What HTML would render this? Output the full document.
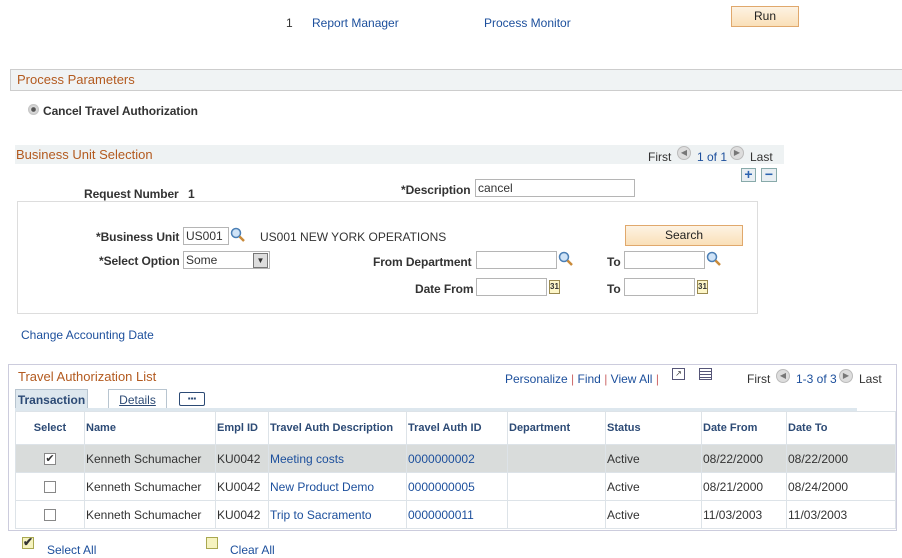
<!DOCTYPE html>
<html><head><meta charset="utf-8"><style>
*{margin:0;padding:0;box-sizing:border-box}
body{width:902px;height:558px;background:#fff;font-family:"Liberation Sans",Arial,sans-serif;font-size:12px;color:#333;position:relative;overflow:hidden}
.a{position:absolute;white-space:nowrap}
.lnk{color:#1c4f9c}
.b{font-weight:bold;color:#333;letter-spacing:-0.1px}
.hdr{color:#b35a1f;font-size:13px}
.inp{position:absolute;border:1px solid #b5b5b5;background:#fff;height:18px;font-size:12px;padding:1px 2px;color:#333}
.btn{position:absolute;border:1px solid #e0a86c;background:linear-gradient(#fdf3e3,#fae0b8);text-align:center;font-size:12px;color:#222}
.mag{position:absolute;width:16px;height:16px}
.cal{position:absolute;width:11px;height:14px;border:1px solid #9a8a50;background:#fdf6c8;font-size:8px;line-height:12px;text-align:center;color:#333;font-weight:bold}
table{border-collapse:collapse;position:absolute;left:15px;top:411px;width:881px}
td{border:1px solid #dde3e8;font-size:12px;padding:0 1px;height:28px;color:#333;white-space:nowrap}
th{border:1px solid #dde3e8;font-size:11px;font-weight:bold;color:#2c4a75;text-align:left;height:33px;padding:0 1px}
.cb{display:inline-block;width:12px;height:12px;border:1px solid #888;background:#fff;vertical-align:middle;position:relative;font-size:11px;line-height:10px;text-align:center}
</style></head><body>
<div class="a" style="left:286px;top:16px">1</div>
<div class="a lnk" style="left:312px;top:16px">Report Manager</div>
<div class="a lnk" style="left:484px;top:16px">Process Monitor</div>
<div class="btn" style="left:731px;top:6px;width:68px;height:21px;line-height:19px">Run</div>

<div class="a" style="left:10px;top:69px;width:892px;height:22px;background:#f0f3f4;border:1px solid #cdcdcd;border-right:none"></div>
<div class="a hdr" style="left:17px;top:72px">Process Parameters</div>
<div class="a" style="left:28px;top:104px;width:11px;height:11px;border-radius:50%;background:radial-gradient(#555 25%,#ddd 35%,#aaa 100%)"></div>
<div class="a b" style="left:43px;top:104px">Cancel Travel Authorization</div>

<div class="a" style="left:15px;top:145px;width:769px;height:19px;background:#eef2f3"></div>
<div class="a hdr" style="left:16px;top:147px">Business Unit Selection</div>
<div class="a" style="left:648px;top:150px;color:#333">First</div>
<div class="a" style="left:677px;top:146px;width:14px;height:14px;border-radius:50%;background:#ddd;border:1px solid #bbb;font-size:8px;line-height:12px;text-align:center;color:#777">◀</div>
<div class="a lnk" style="left:697px;top:150px">1 of 1</div>
<div class="a" style="left:730px;top:146px;width:14px;height:14px;border-radius:50%;background:#ddd;border:1px solid #bbb;font-size:8px;line-height:12px;text-align:center;color:#777">▶</div>
<div class="a" style="left:750px;top:150px">Last</div>
<div class="a" style="left:741px;top:168px;width:15px;height:14px;border:1px solid #8aa;background:#e8eef2;color:#2a62b0;font-weight:bold;font-size:14px;line-height:11px;text-align:center">+</div>
<div class="a" style="left:761px;top:168px;width:16px;height:14px;border:1px solid #8aa;background:#e8eef2;color:#2a62b0;font-weight:bold;font-size:14px;line-height:11px;text-align:center">−</div>

<div class="a b" style="left:84px;top:187px">Request Number</div>
<div class="a b" style="left:188px;top:187px">1</div>
<div class="a b" style="left:401px;top:183px">*Description</div>
<div class="inp" style="left:475px;top:179px;width:160px">cancel</div>

<div class="a" style="left:17px;top:201px;width:741px;height:113px;border:1px solid #ddd"></div>
<div class="a b" style="left:96px;top:230px">*Business Unit</div>
<div class="inp" style="left:183px;top:227px;width:46px">US001</div>
<svg class="mag" style="left:230px;top:227px" viewBox="0 0 16 16"><circle cx="6" cy="6" r="4.5" fill="#cfe3f7" stroke="#4b7fb5" stroke-width="1.5"/><path d="M9.5 9.5L14 14" stroke="#c98a3a" stroke-width="2.5"/></svg>
<div class="a" style="left:260px;top:230px">US001 NEW YORK OPERATIONS</div>
<div class="btn" style="left:625px;top:225px;width:118px;height:21px;line-height:19px">Search</div>
<div class="a b" style="left:99px;top:254px">*Select Option</div>
<div class="inp" style="left:183px;top:251px;width:87px">Some</div>
<div class="a" style="left:253px;top:253px;width:15px;height:15px;background:#ddd;border:1px solid #777;font-size:8px;line-height:13px;text-align:center">▼</div>
<div class="a b" style="left:373px;top:255px">From Department</div>
<div class="inp" style="left:476px;top:251px;width:81px"></div>
<svg class="mag" style="left:558px;top:251px" viewBox="0 0 16 16"><circle cx="6" cy="6" r="4.5" fill="#cfe3f7" stroke="#4b7fb5" stroke-width="1.5"/><path d="M9.5 9.5L14 14" stroke="#c98a3a" stroke-width="2.5"/></svg>
<div class="a b" style="left:607px;top:255px">To</div>
<div class="inp" style="left:624px;top:251px;width:81px"></div>
<svg class="mag" style="left:706px;top:251px" viewBox="0 0 16 16"><circle cx="6" cy="6" r="4.5" fill="#cfe3f7" stroke="#4b7fb5" stroke-width="1.5"/><path d="M9.5 9.5L14 14" stroke="#c98a3a" stroke-width="2.5"/></svg>
<div class="a b" style="left:415px;top:282px">Date From</div>
<div class="inp" style="left:476px;top:278px;width:71px"></div>
<div class="cal" style="left:549px;top:280px">31</div>
<div class="a b" style="left:607px;top:282px">To</div>
<div class="inp" style="left:624px;top:278px;width:71px"></div>
<div class="cal" style="left:697px;top:280px">31</div>

<div class="a lnk" style="left:21px;top:328px">Change Accounting Date</div>

<div class="a" style="left:8px;top:364px;width:889px;height:167px;border:1px solid #ccd"></div>
<div class="a" style="left:9px;top:365px;width:887px;height:24px;background:#fff"></div>
<div class="a hdr" style="left:18px;top:369px">Travel Authorization List</div>
<div class="a" style="left:505px;top:372px"><span class="lnk">Personalize</span> <span style="color:#c66">|</span> <span class="lnk">Find</span> <span style="color:#c66">|</span> <span class="lnk">View All</span> <span style="color:#c66">|</span></div>
<div class="a" style="left:672px;top:368px;width:13px;height:12px;border:1px solid #557;font-size:8px;line-height:10px;text-align:center">↗</div>
<div class="a" style="left:699px;top:368px;width:13px;height:12px;border:1px solid #557;background:repeating-linear-gradient(#fff 0 2px,#557 2px 3px)"></div>
<div class="a" style="left:747px;top:372px">First</div>
<div class="a" style="left:776px;top:369px;width:14px;height:14px;border-radius:50%;background:#ddd;border:1px solid #bbb;font-size:8px;line-height:12px;text-align:center;color:#777">◀</div>
<div class="a lnk" style="left:796px;top:372px">1-3 of 3</div>
<div class="a" style="left:839px;top:369px;width:14px;height:14px;border-radius:50%;background:#ddd;border:1px solid #bbb;font-size:8px;line-height:12px;text-align:center;color:#777">▶</div>
<div class="a" style="left:859px;top:372px">Last</div>
<div class="a" style="left:15px;top:389px;width:73px;height:22px;background:#dde7ee;border:1px solid #b8c5d0;border-bottom:none;color:#2c4a75;font-weight:bold;font-size:12px;text-align:center;line-height:20px">Transaction</div>
<div class="a" style="left:108px;top:389px;width:59px;height:21px;border:1px solid #b8c5d0;border-bottom:none;color:#2c4a75;font-size:12px;text-align:center;line-height:20px;text-decoration:underline">Details</div>
<div class="a" style="left:179px;top:392px;width:26px;height:14px;border:1px solid #2c4a75;border-radius:2px;font-size:8px;line-height:11px;text-align:center;color:#2c4a75">▪▪▪</div>
<div class="a" style="left:15px;top:408px;width:842px;height:3px;background:#dde7ee"></div>
<table>
<tr><th style="width:69px;text-align:center">Select</th><th style="width:131px">Name</th><th style="width:53px">Empl ID</th><th style="width:138px">Travel Auth Description</th><th style="width:101px">Travel Auth ID</th><th style="width:98px">Department</th><th style="width:96px">Status</th><th style="width:85px">Date From</th><th>Date To</th></tr>
<tr style="background:#d9dcdb"><td style="text-align:center"><span class="cb">✔</span></td><td>Kenneth Schumacher</td><td>KU0042</td><td class="lnk">Meeting costs</td><td class="lnk">0000000002</td><td></td><td>Active</td><td>08/22/2000</td><td>08/22/2000</td></tr>
<tr><td style="text-align:center"><span class="cb"></span></td><td>Kenneth Schumacher</td><td>KU0042</td><td class="lnk">New Product Demo</td><td class="lnk">0000000005</td><td></td><td>Active</td><td>08/21/2000</td><td>08/24/2000</td></tr>
<tr><td style="text-align:center"><span class="cb"></span></td><td>Kenneth Schumacher</td><td>KU0042</td><td class="lnk">Trip to Sacramento</td><td class="lnk">0000000011</td><td></td><td>Active</td><td>11/03/2003</td><td>11/03/2003</td></tr>
</table>
<div class="a" style="left:22px;top:537px;width:12px;height:12px;border:1px solid #a9a850;background:#f6f3c0;font-size:12px;line-height:9px;text-align:center;font-weight:bold">✔</div>
<div class="a lnk" style="left:47px;top:543px">Select All</div>
<div class="a" style="left:206px;top:537px;width:12px;height:12px;border:1px solid #a9a850;background:#f6f3c0"></div>
<div class="a lnk" style="left:230px;top:543px">Clear All</div>
</body></html>
